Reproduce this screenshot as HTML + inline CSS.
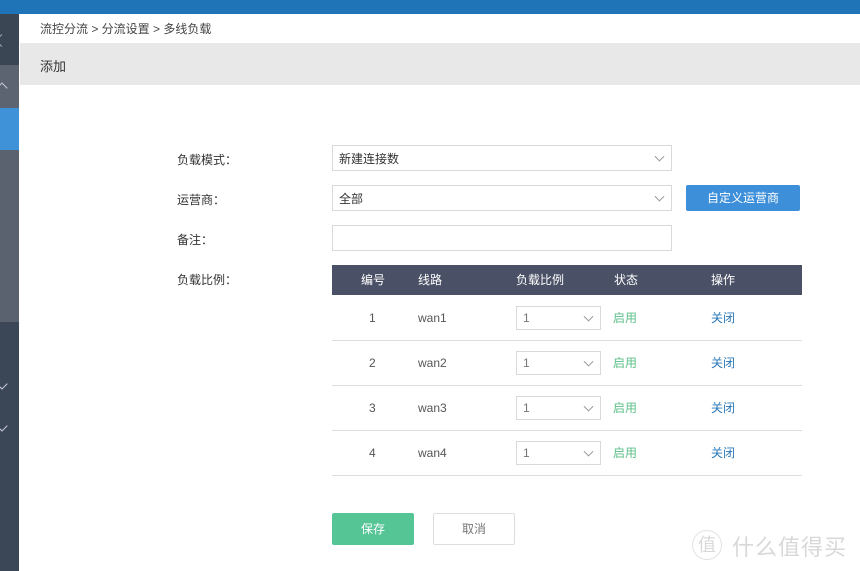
<!DOCTYPE html>
<html><head><meta charset="utf-8"><style>
*{margin:0;padding:0;box-sizing:border-box}
body{width:860px;height:571px;overflow:hidden;background:#fff;font-family:"Liberation Sans","Noto Sans CJK SC",sans-serif;font-size:12px;color:#333;position:relative}
.a{position:absolute}
.sel{position:absolute;border:1px solid #d9d9d9;background:#fff;padding-left:6px;display:flex;align-items:center;color:#333}
.chev{position:absolute;right:8px;top:50%;width:7px;height:7px;border-right:1px solid #999;border-bottom:1px solid #999;transform:translateY(-70%) rotate(45deg)}
.lbl{position:absolute;left:177px;color:#333}
.th{position:absolute;top:265px;height:30px;line-height:30px;color:#fff}
.row{position:absolute;left:332px;width:470px;height:45px;border-bottom:1px solid #ddd}
.row span{position:absolute;top:0;line-height:45px}
</style></head><body>
<div class="a" style="left:0;top:0;width:860px;height:14px;background:#1f74b8"></div>
<div class="a" style="left:0;top:14px;width:19px;height:51px;background:#3b4655"></div>
<div class="a" style="left:0;top:65px;width:19px;height:43px;background:#5b6470"></div>
<div class="a" style="left:0;top:108px;width:19px;height:42px;background:#3f91d8"></div>
<div class="a" style="left:0;top:150px;width:19px;height:172px;background:#59626e"></div>
<div class="a" style="left:0;top:322px;width:19px;height:249px;background:#3b4656"></div>
<div class="a" style="left:-3px;top:36px;width:9px;height:9px;border-left:1px solid #aab;border-bottom:1px solid #aab;transform:rotate(45deg)"></div>
<div class="a" style="left:-2px;top:84px;width:8px;height:8px;border-left:1px solid #ccd;border-top:1px solid #ccd;transform:rotate(45deg)"></div>
<div class="a" style="left:-2px;top:380px;width:8px;height:8px;border-right:1px solid #ccd;border-bottom:1px solid #ccd;transform:rotate(45deg)"></div>
<div class="a" style="left:-2px;top:422px;width:8px;height:8px;border-right:1px solid #ccd;border-bottom:1px solid #ccd;transform:rotate(45deg)"></div>
<div class="a" style="left:40px;top:20px;color:#444">流控分流 &gt; 分流设置 &gt; 多线负载</div>
<div class="a" style="left:20px;top:43px;width:840px;height:42px;background:#e8e8e8"></div>
<div class="a" style="left:40px;top:56px;font-size:13px;color:#333">添加</div>
<div class="lbl" style="top:151px">负载模式：</div>
<div class="lbl" style="top:191px">运营商：</div>
<div class="lbl" style="top:231px">备注：</div>
<div class="lbl" style="top:271px">负载比例：</div>
<div class="sel" style="left:332px;top:145px;width:340px;height:26px">新建连接数<i class="chev"></i></div>
<div class="sel" style="left:332px;top:185px;width:340px;height:26px">全部<i class="chev"></i></div>
<div class="sel" style="left:332px;top:225px;width:340px;height:26px"></div>
<div class="a" style="left:686px;top:185px;width:114px;height:26px;background:#3d8fda;border-radius:2px;color:#fff;text-align:center;line-height:26px">自定义运营商</div>
<div class="a" style="left:332px;top:265px;width:470px;height:30px;background:#4a5166"></div>
<div class="th" style="left:361px">编号</div>
<div class="th" style="left:418px">线路</div>
<div class="th" style="left:516px">负载比例</div>
<div class="th" style="left:614px">状态</div>
<div class="th" style="left:711px">操作</div>
<div class="row" style="top:296px"><span style="left:37px;color:#555">1</span><span style="left:86px;color:#555">wan1</span><span style="left:281px;color:#5cbf8a">启用</span><span style="left:379px;color:#2a78b8">关闭</span></div>
<div class="row" style="top:341px"><span style="left:37px;color:#555">2</span><span style="left:86px;color:#555">wan2</span><span style="left:281px;color:#5cbf8a">启用</span><span style="left:379px;color:#2a78b8">关闭</span></div>
<div class="row" style="top:386px"><span style="left:37px;color:#555">3</span><span style="left:86px;color:#555">wan3</span><span style="left:281px;color:#5cbf8a">启用</span><span style="left:379px;color:#2a78b8">关闭</span></div>
<div class="row" style="top:431px"><span style="left:37px;color:#555">4</span><span style="left:86px;color:#555">wan4</span><span style="left:281px;color:#5cbf8a">启用</span><span style="left:379px;color:#2a78b8">关闭</span></div>
<div class="sel" style="left:516px;top:306px;width:85px;height:24px;color:#777">1<i class="chev"></i></div>
<div class="sel" style="left:516px;top:351px;width:85px;height:24px;color:#777">1<i class="chev"></i></div>
<div class="sel" style="left:516px;top:396px;width:85px;height:24px;color:#777">1<i class="chev"></i></div>
<div class="sel" style="left:516px;top:441px;width:85px;height:24px;color:#777">1<i class="chev"></i></div>
<div class="a" style="left:332px;top:513px;width:82px;height:32px;background:#55c596;border-radius:2px;color:#fff;text-align:center;line-height:32px">保存</div>
<div class="a" style="left:433px;top:513px;width:82px;height:32px;border:1px solid #ddd;border-radius:2px;color:#777;text-align:center;line-height:30px">取消</div>
<div class="a" style="left:692px;top:530px;width:30px;height:30px;border:1px solid #e2e2e2;border-radius:50%;color:#d8d8d8;text-align:center;line-height:28px;font-size:18px">值</div>
<div class="a" style="left:732px;top:530px;color:#d8d8d8;font-size:22px;letter-spacing:1px">什么值得买</div>
</body></html>
